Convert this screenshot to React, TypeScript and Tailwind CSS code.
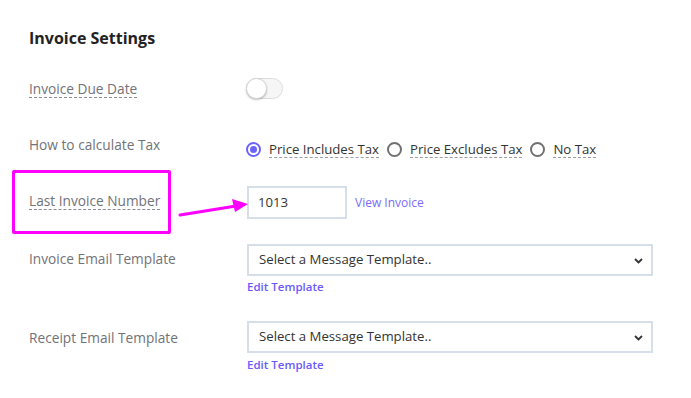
import React from 'react'

const FONT = { fontFamily: '"Open Sans", "Noto Sans", sans-serif' }

function Label({ children, dashed = false }: { children: React.ReactNode; dashed?: boolean }) {
  return (
    <span
      className={
        'inline-block text-[13.7px] leading-[17px] text-[#727279] ' +
        (dashed ? 'border-b border-dashed border-[#8a8a94]' : '')
      }
    >
      {children}
    </span>
  )
}

function Radio({ checked, label }: { checked?: boolean; label: string }) {
  return (
    <div className="flex items-center gap-[8px]">
      <span
        className={
          'flex h-[15px] w-[15px] items-center justify-center rounded-full border-2 ' +
          (checked ? 'border-[#6c63ff]' : 'border-[#707070]')
        }
      >
        {checked && <span className="h-[7px] w-[7px] rounded-full bg-[#6c63ff]" />}
      </span>
      <span className="inline-block border-b border-dashed border-[#9a9aa2] text-[13.2px] leading-[16px] text-[#333]">
        {label}
      </span>
    </div>
  )
}

function TemplateSelect({ last = false }: { last?: boolean }) {
  return (
    <div className="flex flex-col">
      <div className="flex h-[32px] w-[406px] items-center justify-between border-2 border-[#d6deea] bg-white pl-[10px] pr-[8px]">
        <span className="text-[13.2px] text-[#333]">Select a Message Template..</span>
        <svg width="9" height="6" viewBox="0 0 9 6" className="mt-[1px]">
          <path d="M1 1l3.5 3.5L8 1" fill="none" stroke="#333" strokeWidth="1.8" />
        </svg>
      </div>
      <a className={(last ? 'mt-[4px] ' : 'mt-[3px] ') + 'text-[11.5px] font-semibold leading-[16px] text-[#6a5af9]'}>
        Edit Template
      </a>
    </div>
  )
}

export default function App() {
  return (
    <div className="relative h-[398px] w-[691px] overflow-hidden bg-white" style={FONT}>
      <div className="flex flex-col pl-[29px] pt-[26px]">
        <h2 className="text-[16px] font-bold leading-[24px] text-[#222]">Invoice Settings</h2>

        {/* Due date */}
        <div className="mt-[26px] flex items-center">
          <div className="w-[217px]">
            <Label dashed>Invoice Due Date</Label>
          </div>
          <div className="relative h-[21px] w-[37px] rounded-full border border-[#dcdcdc] bg-[#f6f6f6]">
            <span className="absolute left-[-1px] top-[-1px] h-[21px] w-[21px] rounded-full border border-[#d6d6d6] bg-white shadow-[0_1px_2px_rgba(0,0,0,0.25)]" />
          </div>
        </div>

        {/* Tax */}
        <div className="mt-[32px] flex items-start">
          <div className="w-[217px]">
            <Label>How to calculate Tax</Label>
          </div>
          <div className="mt-[9px] flex items-center gap-[8px]">
            <Radio checked label="Price Includes Tax" />
            <Radio label="Price Excludes Tax" />
            <Radio label="No Tax" />
          </div>
        </div>

        {/* Last invoice number */}
        <div className="mt-[28px] flex items-center">
          <div className="w-[218px] pb-[5px]">
            <Label dashed>Last Invoice Number</Label>
          </div>
          <div className="flex h-[33px] w-[100px] items-center border-2 border-[#d6deea] pl-[9px] text-[13.2px] text-[#333]">
            1013
          </div>
          <a className="ml-[8px] text-[12px] text-[#7b6cf6]">View Invoice</a>
        </div>

        {/* Invoice email */}
        <div className="mt-[25px] flex items-start">
          <div className="w-[218px] pt-[2px]">
            <Label>Invoice Email Template</Label>
          </div>
          <TemplateSelect />
        </div>

        {/* Receipt email */}
        <div className="mt-[26px] flex items-start">
          <div className="w-[218px] pt-[4px]">
            <Label>Receipt Email Template</Label>
          </div>
          <TemplateSelect last />
        </div>
      </div>

      {/* annotation */}
      <div className="absolute left-[12px] top-[170px] h-[64px] w-[159px] rounded-[2px] border-[3px] border-[#ff00ff]" />
      <svg className="absolute left-[178px] top-[196px]" width="72" height="24" viewBox="0 0 72 24">
        <path d="M2 19L58 10" stroke="#ff00ff" strokeWidth="3" strokeLinecap="round" />
        <path d="M70 8L54 3L57 16Z" fill="#ff00ff" />
      </svg>
    </div>
  )
}
